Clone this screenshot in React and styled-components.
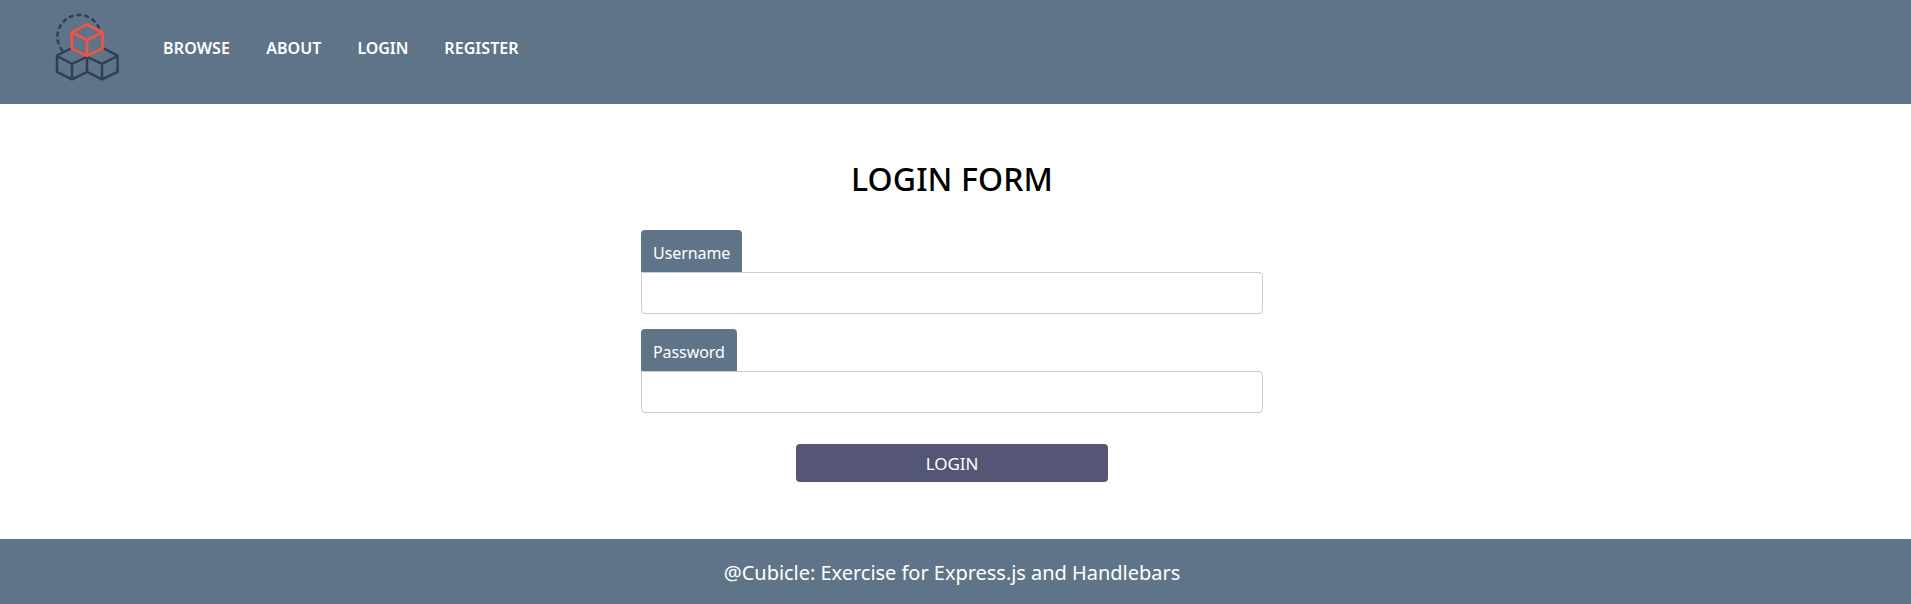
import React from 'react';
import styled, { createGlobalStyle } from 'styled-components';

const GlobalStyle = createGlobalStyle`
  *, *::before, *::after { box-sizing: border-box; }
  body {
    margin: 0;
    background: #fff;
    font-family: "Noto Sans", "Open Sans", sans-serif;
    font-size: 16px;
  }
`;

const Page = styled.div`
  min-height: 100vh;
  display: flex;
  flex-direction: column;
`;

const Header = styled.header`
  display: flex;
  height: 104px;
  padding-left: 52px;
  background: #607489;
`;

const Logo = styled.svg`
  display: block;
  width: 70px;
  height: 90px;
  fill: none;
  stroke: #2c4159;
  stroke-width: 2.5;
  stroke-linejoin: round;
  stroke-linecap: round;
`;

const Nav = styled.nav`
  display: flex;
  align-items: center;
  gap: 36px;
  height: 96px;
  padding-left: 41px;
`;

const NavLink = styled.a`
  color: #fff;
  font-weight: 600;
  line-height: 24px;
  letter-spacing: ${({ $tracking }) => $tracking || '0'};
  text-decoration: none;
`;

const Main = styled.main`
  flex: 1;
  display: flex;
  flex-direction: column;
  align-items: center;
  padding: 51px 7px 0 0;
`;

const Title = styled.h1`
  margin: 0 0 27px;
  font-size: 32px;
  font-weight: 500;
  line-height: 48px;
  letter-spacing: 0.1px;
`;

const Form = styled.form`
  display: flex;
  flex-direction: column;
  width: 622px;
`;

const Field = styled.div`
  display: flex;
  flex-direction: column;
  align-items: flex-start;
  margin-bottom: 15px;
`;

const Label = styled.label`
  height: 42px;
  padding: 11px 12px 7px;
  border-radius: 4px 4px 0 0;
  background: #607489;
  color: #fff;
  line-height: 24px;
  letter-spacing: -0.07px;
`;

const Input = styled.input`
  width: 100%;
  height: 42px;
  padding: 0 12px;
  border: 1px solid #ccc;
  border-radius: 0 4px 4px 4px;
  font: inherit;
  outline: none;
`;

const SubmitButton = styled.button`
  align-self: center;
  width: 312px;
  height: 38px;
  margin-top: 16px;
  padding: 1px 0 0;
  border: 0;
  border-radius: 4px;
  background: #555676;
  color: #fff;
  font: inherit;
  font-size: 17px;
  letter-spacing: -0.1px;
`;

const Footer = styled.footer`
  height: 65px;
  padding: 1px 7px 0 0;
  background: #607489;
  color: #fff;
  font-size: 20px;
  line-height: 66px;
  letter-spacing: -0.03px;
  text-align: center;
`;

const CubesLogo = () => (
  <Logo viewBox="52 0 70 90" aria-hidden="true">
    <path
      d="M62.8 51A21.7 21.7 0 1 1 99.2 28.5"
      strokeDasharray="5 2.8"
      strokeLinecap="butt"
    />
    <path d="M70.5 48.5L57 55.7v16.1l15 7.6 15-7.6 15 7.6 15.6-7.6V55.7L104 48.5M57 56l15 7.8 15-7 15 7 15.6-7.8M72 63.8v15.5M87 57v14.7M102 63.8v15.5" />
    <path
      d="M87 24.3l15.5 8v16L87 55.8l-15.2-7.5v-16zM71.8 32.3L87 40.2l15.5-7.9M87 40.2v15.6"
      stroke="#fb513f"
    />
  </Logo>
);

const links = [
  { text: 'BROWSE', tracking: '0.15px' },
  { text: 'ABOUT', tracking: '0.06px' },
  { text: 'LOGIN', tracking: '-0.06px' },
  { text: 'REGISTER', tracking: '0.05px' },
];

export default function App() {
  return (
    <Page>
      <GlobalStyle />
      <Header>
        <CubesLogo />
        <Nav>
          {links.map(({ text, tracking }) => (
            <NavLink key={text} $tracking={tracking}>{text}</NavLink>
          ))}
        </Nav>
      </Header>
      <Main>
        <Title>LOGIN FORM</Title>
        <Form>
          <Field>
            <Label htmlFor="username">Username</Label>
            <Input id="username" type="text" />
          </Field>
          <Field>
            <Label htmlFor="password">Password</Label>
            <Input id="password" type="password" />
          </Field>
          <SubmitButton type="button">LOGIN</SubmitButton>
        </Form>
      </Main>
      <Footer>@Cubicle: Exercise for Express.js and Handlebars</Footer>
    </Page>
  );
}
